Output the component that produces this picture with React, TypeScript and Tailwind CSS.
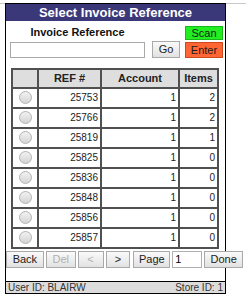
import { useState } from 'react';

const rows = [
  { ref: '25753', account: 1, items: 2 },
  { ref: '25766', account: 1, items: 2 },
  { ref: '25819', account: 1, items: 1 },
  { ref: '25825', account: 1, items: 0 },
  { ref: '25836', account: 1, items: 0 },
  { ref: '25848', account: 1, items: 0 },
  { ref: '25856', account: 1, items: 0 },
  { ref: '25857', account: 1, items: 0 },
];

const btn =
  'h-[17px] border border-[#a9a9a9] bg-gradient-to-b from-[#fafafa] to-[#e2e2e2] text-[11px] leading-none text-[#222]';

export default function App() {
  const [invoice, setInvoice] = useState('');
  const [page, setPage] = useState('1');
  const [selected, setSelected] = useState<number | null>(null);

  return (
    <div className="w-[246px] h-[299px] bg-white font-['Liberation_Sans',Arial,sans-serif] overflow-hidden">
      <div className="mt-[3px] border-t border-[#c8c8c8]">
        <div className="ml-[5px] -mt-px w-[221px] h-[291px] border border-black flex flex-col">
          <div className="h-[17px] bg-[#3b3879] text-white font-bold text-[13px] leading-[17px] text-center">
            Select Invoice Reference
          </div>

          {/* invoice entry */}
          <div className="flex items-end pl-[4px] pt-[5px]">
            <div className="w-[135px] flex flex-col">
              <div className="text-center font-bold text-[11px] leading-[13px] mb-[3px] text-[#111]">
                Invoice Reference
              </div>
              <input
                value={invoice}
                onChange={(e) => setInvoice(e.target.value)}
                className="h-[16px] border border-[#a9a9a9] bg-white text-[11px] px-[2px] outline-none"
              />
            </div>
            <button className={`${btn} ml-[7px] w-[28px] h-[16px]`}>Go</button>
            <div className="ml-[5px] w-[38px] flex flex-col gap-[2px]">
              <button className="h-[14px] bg-[#22ee22] border border-[#18b818] text-[11px] leading-none text-[#1a1a1a]">
                Scan
              </button>
              <button className="h-[16px] bg-[#ff6633] border border-[#cc4a1e] text-[11px] leading-none text-[#1a1a1a]">
                Enter
              </button>
            </div>
          </div>

          {/* results */}
          <table className="ml-[5px] mt-[10px] w-[208px] border-collapse text-[10px] text-[#222]">
            <thead>
              <tr className="h-[18px] bg-[#dedede]">
                <th className="w-[26px] border-2 border-[#505050]"></th>
                <th className="w-[63px] border-2 border-[#505050] font-bold text-[11px]">REF #</th>
                <th className="w-[78px] border-2 border-[#505050] font-bold text-[11px]">Account</th>
                <th className="border-2 border-[#505050] font-bold text-[11px]">Items</th>
              </tr>
            </thead>
            <tbody>
              {rows.map((r, i) => (
                <tr key={r.ref} className="h-[20px]" onClick={() => setSelected(i)}>
                  <td className="border-2 border-[#505050]">
                    <div
                      className={`mx-auto w-[13px] h-[13px] rounded-full border border-[#b4b4b4] bg-gradient-to-b from-[#f2f2f2] to-[#d4d4d4] ${
                        selected === i ? 'ring-2 ring-inset ring-[#444]' : ''
                      }`}
                    />
                  </td>
                  <td className="border-2 border-[#505050] text-right pr-[2px]">{r.ref}</td>
                  <td className="border-2 border-[#505050] text-right pr-[2px]">{r.account}</td>
                  <td className="border-2 border-[#505050] text-right pr-[2px]">{r.items}</td>
                </tr>
              ))}
            </tbody>
          </table>

          {/* paging */}
          <div className="flex mt-[2px] gap-[2px] w-[237px]">
            <button className={`${btn} w-[38px]`}>Back</button>
            <button className={`${btn} w-[30px] text-[#b0b0b0]`}>Del</button>
            <button className={`${btn} w-[26px] text-[#b0b0b0]`}>&lt;</button>
            <button className={`${btn} w-[25px]`}>&gt;</button>
            <button className={`${btn} w-[37px] ml-[1px]`}>Page</button>
            <input
              value={page}
              onChange={(e) => setPage(e.target.value)}
              className="h-[17px] w-[30px] border border-[#b0b0b0] bg-white text-[11px] px-[2px] outline-none"
            />
            <button className={`${btn} w-[39px]`}>Done</button>
          </div>

          <div className="mt-auto h-[12px] border-t border-black bg-[#dcdcdc] flex justify-between px-[2px] text-[10px] leading-[11px] text-[#333]">
            <span>User ID: BLAIRW</span>
            <span>Store ID: 1</span>
          </div>
        </div>
      </div>
    </div>
  );
}
